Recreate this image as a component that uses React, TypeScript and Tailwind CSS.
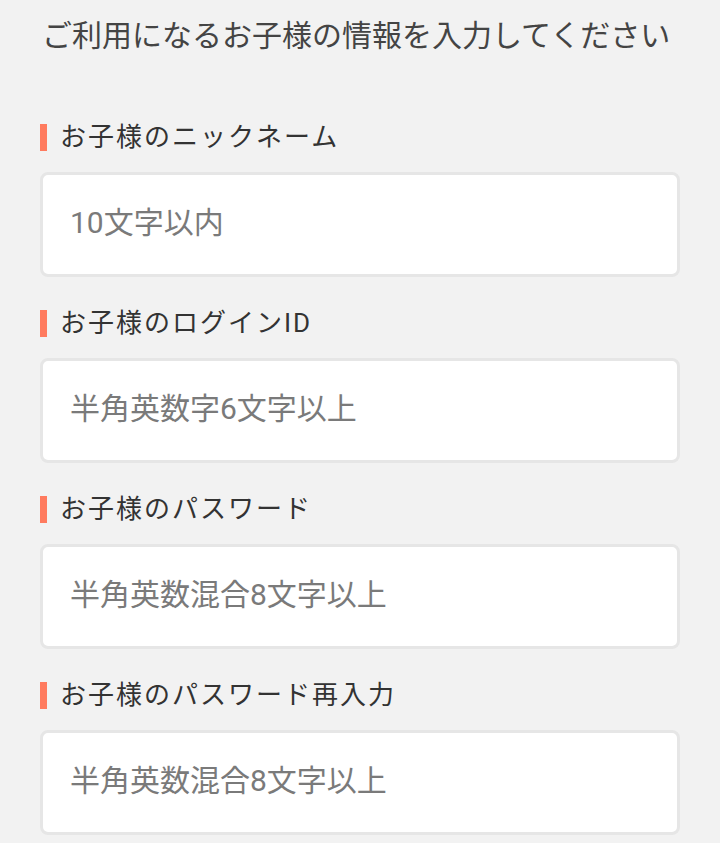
// Child account registration form: nickname, login ID and password fields.

const fields = [
  { label: "お子様のニックネーム", placeholder: "10文字以内", type: "text" },
  { label: "お子様のログインID", placeholder: "半角英数字6文字以上", type: "text" },
  { label: "お子様のパスワード", placeholder: "半角英数混合8文字以上", type: "password" },
  { label: "お子様のパスワード再入力", placeholder: "半角英数混合8文字以上", type: "password" },
];

function Field({ label, placeholder, type }: { label: string; placeholder: string; type: string }) {
  return (
    <div className="mb-[28px]">
      <div className="flex h-[36px] items-center gap-[13px]">
        <span className="h-[27px] w-[7px] bg-[#ff7b5f]" />
        <span className="text-[26px] leading-[36px] tracking-[2px] text-[#333333]">{label}</span>
      </div>
      <input
        type={type}
        placeholder={placeholder}
        className="mt-[17px] box-border h-[105px] w-full rounded-[8px] border-[3px] border-[#e6e6e6] bg-white px-[27px] pb-[4px] text-[30px] text-[#333333] outline-none placeholder:text-[#7a7a7a]"
      />
    </div>
  );
}

export default function App() {
  return (
    <div
      className="min-h-[843px] bg-[#f2f2f2] px-[40px] pt-[16px]"
      style={{ fontFamily: 'Roboto, "Noto Sans CJK JP", "Noto Sans", sans-serif' }}
    >
      <h1 className="h-[40px] pl-[2px] text-[30px] leading-[40px] font-normal text-[#444444]">
        ご利用になるお子様の情報を入力してください
      </h1>
      <form className="mt-[63px]">
        {fields.map((f) => (
          <Field key={f.label} {...f} />
        ))}
      </form>
    </div>
  );
}
